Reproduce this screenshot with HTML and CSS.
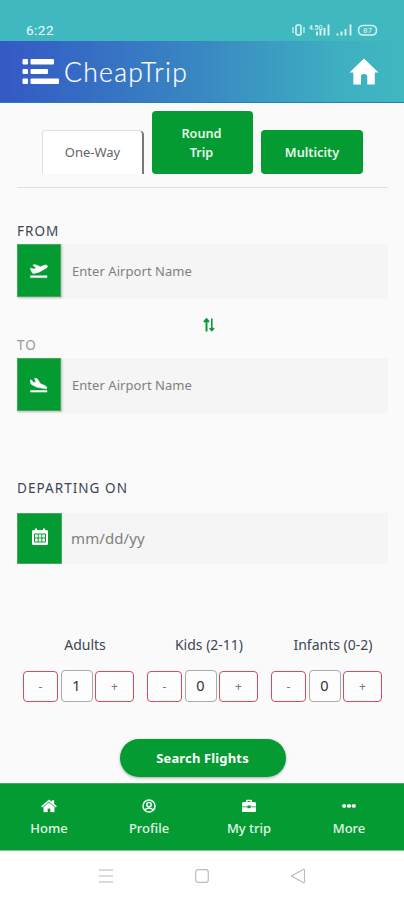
FILE: index.html
```html
<!DOCTYPE html>
<html lang="en">
<head>
<meta charset="utf-8">
<title>CheapTrip</title>
<link rel="stylesheet" href="styles.css">
</head>
<body>
<div class="status">
  <span class="time">6:22</span>
  <svg class="status-icons" width="90" height="16" viewBox="0 0 90 16" fill="none" stroke="#d9f4f4">
    <rect x="5" y="3" width="5" height="10" rx="1.500" stroke-width="1.600"/><path d="M2 5v6M13 5v6" stroke-width="1.200"/>
    <text class="net" x="18" y="7.500" stroke="none" fill="#e6f8f8">4.5G</text>
    <path d="M26 9.500v4M29.500 8v5.500M33.500 6v7.500M37.500 2.500v11" stroke-width="1.900"/>
    <path d="M46.500 11.500v2M50.500 9.500v4M54.500 7v6.500M59.500 2.500v11" stroke-width="1.900"/>
    <rect x="67.500" y="3.500" width="18" height="9.500" rx="4.500" stroke-width="1.600"/>
    <text class="charge" x="72" y="11" stroke="none" fill="#e6f8f8">87</text>
  </svg>
</div>
<header class="header">
  <svg class="logo" width="38" height="27" viewBox="0 0 38 27" fill="#fff">
    <rect x="0.500" y="1" width="5.500" height="5.500" rx="1"/><rect x="8.500" y="1" width="23.500" height="5.500" rx="1"/>
    <rect x="0.500" y="11" width="5.500" height="5" rx="1"/><rect x="8.500" y="11" width="17.500" height="5" rx="1"/>
    <rect x="0.500" y="20.500" width="5.500" height="5.500" rx="1"/><rect x="8.500" y="20.500" width="28.500" height="5.500" rx="1"/>
  </svg>
  <span class="brand">CheapTrip</span>
  <svg class="home" width="30" height="28" viewBox="0 0 30 28" fill="#fff"><path d="M15 0.500 29.500 14.500H25.800V26.500H18.300V18.500Q18.300 16 15 16T12 18.500V26.500H4.300V14.500H0.500Z"/></svg>
</header>
<main class="main">
  <nav class="tabs">
    <div class="tab plain"><span>One-Way</span></div>
    <div class="tab tall"><span>Round</span><span>Trip</span></div>
    <div class="tab"><span>Multicity</span></div>
  </nav>
  <label class="label from">FROM</label>
  <div class="field">
    <div class="tile"><svg width="20" height="16" viewBox="0 0 20 16" fill="#fff" stroke="#fff" stroke-width=".5" stroke-linejoin="round"><path d="M1.500 12.800h16.500v1.800H1.500zM1.200 5.800 2.400 5.200 4.200 6.100 7.500 5.200 3.800 2.200 5.800 1.400 11.500 3.800 15.500 2.200Q18 1.700 18.400 2.900T17 5.200L10 9.200 4.800 10.600Q3.700 10.700 3.200 9.800Z"/></svg></div>
    <span class="ph">Enter Airport Name</span>
  </div>
  <div class="swap"><svg width="12" height="16" viewBox="0 0 12 16" fill="none" stroke="#0a9a34"><path d="M3.500 14.500V2.500M1 5 3.500 2.200 6 5" stroke-width="2"/><path d="M8.800 1.500V13M6.600 11 8.800 13.500 11.100 11" stroke-width="1.600"/></svg></div>
  <label class="label to">TO</label>
  <div class="field">
    <div class="tile"><svg width="20" height="16" viewBox="0 0 20 16" fill="#fff" stroke="#fff" stroke-width=".5" stroke-linejoin="round"><path d="M1.500 13.500h16.500v1.600H1.500zM1.500 2.800 2.800 3.200 3.800 5 6.900 5.700 5.600 1.300 8 1.600 11.800 7 15.300 8.200Q18.200 9.600 17.900 11T15.500 11.600L8 10.200 3 7.700Q1.600 7 1.500 5.500Z"/></svg></div>
    <span class="ph">Enter Airport Name</span>
  </div>
  <label class="label depart">DEPARTING ON</label>
  <div class="field date">
    <div class="tile"><svg width="20" height="18" viewBox="0 0 20 18"><path fill="#fff" d="M3.500 2H5V.5h2V2h6V.5h2V2h1.500Q18 2 18 3.500V15.500Q18 17 16.500 17h-13Q2 17 2 15.500V3.500Q2 2 3.500 2Z"/><path fill="none" stroke="#0a9a34" stroke-width="1" d="M4.500 6h11v8h-11zM4.500 10h11M8.200 6v8M11.800 6v8"/></svg></div>
    <span class="ph ph-date">mm/dd/yy</span>
  </div>
  <div class="counters">
    <section class="counter"><span class="name">Adults</span><div class="row"><button class="step minus">-</button><span class="num">1</span><button class="step plus">+</button></div></section>
    <section class="counter"><span class="name">Kids (2-11)</span><div class="row"><button class="step minus">-</button><span class="num">0</span><button class="step plus">+</button></div></section>
    <section class="counter"><span class="name">Infants (0-2)</span><div class="row"><button class="step minus">-</button><span class="num">0</span><button class="step plus">+</button></div></section>
  </div>
  <button class="search"><span>Search Flights</span></button>
</main>
<nav class="bottom">
  <div class="item"><svg width="16" height="14" viewBox="0 0 16 14" fill="#fff" stroke="#fff" stroke-width=".3"><path d="M8 .7 10.800 3V1.500H13V5L15.700 7.200 14.800 8.200 8 2.600 1.200 8.200.3 7.200ZM8 3.700 13.300 8V13H9.500V9.500H6.500V13H2.700V8Z"/></svg><span>Home</span></div>
  <div class="item"><svg width="16" height="14" viewBox="0 0 16 14" fill="none" stroke="#e9faee" stroke-width="1.600"><circle cx="8" cy="7" r="6"/><circle cx="8" cy="5.700" r="2.200"/><path d="M4 11Q5 9.200 8 9.200T12 11"/></svg><span>Profile</span></div>
  <div class="item"><svg width="16" height="14" viewBox="0 0 16 14"><path fill="#fff" d="M5 3V1.800Q5 .7 6 .7h4q1 0 1 1.100V3h2.500Q15 3 15 4.500V7.500H9.500V6.500h-3v1H1v-3Q1 3 2.500 3ZM6.500 3h3V2h-3ZM1 8.200h5.500v1h3v-1H15V12q0 1-1 1H2q-1 0-1-1Z"/></svg><span>My trip</span></div>
  <div class="item"><svg width="16" height="14" viewBox="0 0 16 14" fill="#fff"><rect x="1.200" y="5.200" width="4" height="3.500" rx="1.400"/><rect x="6" y="5.200" width="4" height="3.500" rx="1.400"/><rect x="10.800" y="5.200" width="4" height="3.500" rx="1.400"/></svg><span>More</span></div>
</nav>
<footer class="system">
  <svg width="16" height="16" viewBox="0 0 16 16" fill="none" stroke="#cfcfcf" stroke-width="1.300"><path d="M1 2h14M1 8h14M1 14h14"/></svg>
  <svg width="16" height="16" viewBox="0 0 16 16" fill="none" stroke="#bcbcbc" stroke-width="1.200"><rect x="1.700" y="1.700" width="12.600" height="12.600" rx="2.500"/></svg>
  <svg width="16" height="16" viewBox="0 0 16 16" fill="none" stroke="#bcbcbc" stroke-width="1.200"><path d="M1.500 8 13.200 1.500Q14.500 1.200 14.500 2.500V13.500Q14.500 14.800 13.200 14.500Z" stroke-linejoin="round"/></svg>
</footer>
</body>
</html>
```
FILE: styles.css
```css
* { box-sizing: border-box; }
body { margin: 0; width: 404px; height: 900px; overflow: hidden; background: #fff; font-family: "Noto Sans", "Open Sans", sans-serif; font-size: 13px; color: #3c4555; }
svg { display: block; flex: none; }
button { padding: 0; font-family: inherit; }
span, label { white-space: nowrap; }
.status { height: 41px; background: #40b8c0; display: flex; justify-content: space-between; padding: 22px 23px 0 26px; color: #effcfb; }
.time { font: 13.500px/16px Roboto, sans-serif; letter-spacing: .5px; }
.net { font: 500 6.500px Roboto, sans-serif; }
.charge { font: 8px Roboto, sans-serif; }
.header { height: 62px; display: flex; align-items: center; padding: 0 25px 0 22px; background: linear-gradient(90deg, #3459c5 0%, #3988c2 50%, #3eafc1 84%, #40b8c0 100%); border-bottom: 1px solid #237fc0; }
.brand { font: 300 26.500px/32px Lato, sans-serif; color: #fff; -webkit-text-stroke: .2px #fff; margin-left: 4px; flex: 1; letter-spacing: 1.300px; }
.main { height: 680px; background: #fafafa; padding: 0 16px 0 17px; display: flex; flex-direction: column; }
.tabs { height: 85px; flex: none; display: flex; align-items: flex-end; gap: 8px; padding: 0 25px 13px; border-bottom: 1px solid #e0e0e0; }
.tab { width: 102px; height: 44px; background: #059b33; border-radius: 4px; color: #e5f7e9; font-weight: 600; font-size: 12.700px; line-height: 19px; display: flex; flex-direction: column; justify-content: center; align-items: center; }
.tab.tall { height: 63px; width: 101px; padding-right: 2px; }
.tab.plain { width: 102px; background: #fff; color: #666; font-weight: 400; font-size: 13px; border: 1px solid #e0e0e0; border-right: 2px solid #777; border-bottom: 0; border-radius: 4px 5px 0 0; }
.label { height: 20px; line-height: 20px; font-size: 13.500px; letter-spacing: 1.050px; flex: none; }
.from { margin-top: 33px; margin-bottom: 3px; }
.to { color: #999; margin-bottom: 3px; }
.depart { margin-top: 65px; margin-bottom: 15px; }
.field { height: 55px; flex: none; display: flex; background: #f5f5f5; }
.tile { width: 44px; height: 53px; background: #059b33; border: 1px solid #45a85c; box-shadow: 1px 1px 2px #bbb; display: flex; align-items: center; justify-content: center; }
.ph { margin-left: 11px; line-height: 54px; font-size: 13px; letter-spacing: .05px; color: #808080; }
.swap { height: 36px; flex: none; display: flex; justify-content: center; align-items: center; padding: 15px 0 0 13px; }
.date { height: 51px; }
.date .tile { height: 51px; width: 45px; box-shadow: none; padding-bottom: 4px; }
.ph-date { font-size: 15px; line-height: 50px; margin-left: 9px; letter-spacing: .1px; }
.counters { margin-top: 70px; display: flex; gap: 13px; padding-left: 6px; flex: none; }
.counter { width: 111px; display: flex; flex-direction: column; }
.name { height: 22px; line-height: 22px; font-size: 14px; text-align: center; margin-left: 13px; align-self: center; }
.row { display: flex; gap: 2px; margin-top: 14px; height: 32px; align-items: center; }
.step { height: 31px; background: #fdfdfd; border: 1px solid #dc4a60; border-radius: 4px; font-size: 12px; color: #777; }
.minus { width: 35px; }
.plus { width: 39px; }
.num { width: 32px; height: 32px; margin: 0 .5px; border: 1px solid #aaa; border-radius: 4px; background: #fdfdfd; color: #303030; font-size: 14.500px; line-height: 29px; text-align: center; }
.search { align-self: center; margin: 37px 0 0; width: 166px; height: 38px; flex: none; border: 0; border-radius: 20px; background: #059b33; color: #fff; font-weight: 700; font-size: 13px; letter-spacing: .15px; box-shadow: 0 1px 3px #aaa; }
.bottom { height: 68px; background: #059b33; display: flex; color: #e2f7e8; border-top: 1px solid #45a85c; border-bottom: 1px solid #7fc492; }
.item { width: 100px; flex: none; display: flex; flex-direction: column; align-items: center; padding: 15px 2px 0 0; font-size: 13px; line-height: 20px; font-weight: 500; }
.item span { margin-top: 5px; }
.system { height: 49px; display: flex; justify-content: center; gap: 80px; padding: 17px 0 0; background: #fff; }
```
